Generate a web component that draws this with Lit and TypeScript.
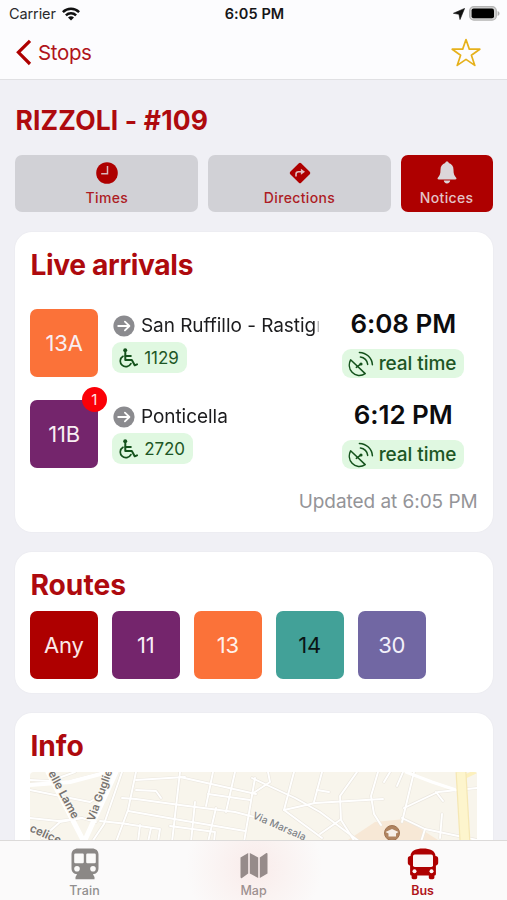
import { LitElement, html, css, svg } from "lit";
import { customElement, property } from "lit/decorators.js";

type Arrival = { line: string; color: string; dest: string; bus: string; time: string; alerts?: number };

const ARRIVALS: Arrival[] = [
  { line: "13A", color: "#fb7239", dest: "San Ruffillo - Rastignano", bus: "1129", time: "6:08 PM" },
  { line: "11B", color: "#74256c", dest: "Ponticella", bus: "2720", time: "6:12 PM", alerts: 1 },
];

const ROUTES = [
  { name: "Any", color: "#ae0000", ink: "#fbe9e9" },
  { name: "11", color: "#74256c", ink: "#f8eef7" },
  { name: "13", color: "#fb7239", ink: "#fff1ea" },
  { name: "14", color: "#42a198", ink: "#0a1514" },
  { name: "30", color: "#7167a3", ink: "#f3f1fa" },
];

const wifi = svg`<svg width="18" height="14" viewBox="0 0 18 14"><g fill="none" stroke="#111" stroke-width="2.5"><path d="M.9 5.1a11.6 11.6 0 0 1 16.2 0"/><path d="M3.9 8.3a7.3 7.3 0 0 1 10.2 0"/></g><path d="M9 13.6 6 10.6a4.3 4.3 0 0 1 6 0z" fill="#111"/></svg>`;
const locate = svg`<svg width="12" height="12" viewBox="0 0 12 12"><path d="M11.6.4 7 11.6 5.9 6.3.4 5.3z" fill="#111" stroke="#111" stroke-width=".6" stroke-linejoin="round"/></svg>`;
const battery = svg`<svg width="31" height="15" viewBox="0 0 31 15"><rect x=".7" y=".7" width="26.6" height="13.4" rx="4.2" fill="#d2d2d2" stroke="#b4b4b4" stroke-width="1.3"/><rect x="2.6" y="2.6" width="22.4" height="9.6" rx="2" fill="#000"/><path d="M28.6 5v5c1.2-.4 1.9-1.4 1.9-2.5s-.7-2.1-1.9-2.5z" fill="#adadad"/></svg>`;
const chevron = svg`<svg width="16" height="27" viewBox="0 0 16 27"><path d="M14 1.8 2.4 13.3 14 25" fill="none" stroke="#ae0000" stroke-width="3.2"/></svg>`;
const star = svg`<svg width="30" height="29" viewBox="0 0 30 29"><path d="M15 1.5 18.3 11.1 28.8 11.2 20.4 17.3 23.8 27.4 15 21.4 6.2 27.4 9.6 17.3 1.2 11.2 11.7 11.1z" fill="none" stroke="#e6b11c" stroke-width="1.7" stroke-linejoin="round"/></svg>`;
const clock = svg`<svg width="22" height="22" viewBox="0 0 22 22"><circle cx="11" cy="11" r="10.8" fill="#ae0000"/><path d="M11.5 4v7.7H5.2" fill="none" stroke="#d8b9bd" stroke-width="1.5"/></svg>`;
const turn = svg`<svg width="22" height="22" viewBox="0 0 22 22"><rect x="3.3" y="3.3" width="15.4" height="15.4" rx="1.6" transform="rotate(45 11 11)" fill="#ae0000"/><path d="M7 14.5v-2.3c0-1.700.8-2.500 2.500-2.500h3" fill="none" stroke="#e0bfc2" stroke-width="1.6"/><path d="M11.9 6.7 16 9.7l-4.100 3z" fill="#e0bfc2"/></svg>`;
const bell = svg`<svg width="20" height="23" viewBox="0 0 20 23"><path d="M10 .4c1 0 1.700.6 1.800 1.500 3 .8 4.700 3.300 4.700 6.800 0 4.200.8 5.900 2.500 7.700.9 1 .4 2-.8 2H1.800c-1.200 0-1.700-1-.8-2 1.700-1.800 2.500-3.500 2.500-7.700 0-3.500 1.700-6 4.700-6.800C8.300 1 9 .4 10 .4z" fill="#dcd6d9"/><path d="M6.800 19.500h6.400c-.2 1.700-1.400 2.900-3.200 2.900s-3-1.200-3.200-2.900z" fill="#dcd6d9"/></svg>`;
const arrow = svg`<svg width="22" height="22" viewBox="0 0 22 22"><circle cx="11" cy="11" r="10.6" fill="#8b8b8f"/><path d="M5.2 11h11M11.9 6.6l4.500 4.400-4.500 4.400" fill="none" stroke="#fff" stroke-width="1.8" stroke-linecap="round" stroke-linejoin="round"/></svg>`;
const wheelchair = svg`<svg width="20" height="20" viewBox="0 0 20 20"><g fill="none" stroke="#14521c" stroke-width="2" stroke-linejoin="round" stroke-linecap="round"><path d="M7.3 4.5v7.4h6.5l2.900 5.400 2.300-1"/><path d="M7.5 7.9h5.3"/><path d="M5 8.3a5.600 5.600 0 1 0 7.900 7.300" stroke-width="1.7"/></g><circle cx="7.2" cy="2.2" r="2" fill="#14521c"/></svg>`;
const dish = svg`<svg width="26" height="26" viewBox="0 0 26 26"><g fill="none" stroke="#14521c" stroke-width="1.5" stroke-linecap="round" stroke-linejoin="round"><path d="M2.600 8.800 17.200 22.600c-4.200 2.900-9.800 2.300-13.100-1.300S.7 12.500 2.600 8.800z"/><path d="M8.300 16.400l4.600-3.500"/><path d="M12.400 6c3.900.4 7 3.500 7.300 7.400"/><path d="M11.400 1.400c6.900.2 12.600 5.500 13 12.300"/></g><circle cx="13" cy="13" r="1.600" fill="#14521c"/></svg>`;
const train = svg`<svg width="28" height="32" viewBox="0 0 28 32"><path d="M7 .5h14c4 0 6.500 2.200 6.500 6v13.500c0 4-2.400 6.200-5.600 6.200L23.500 29v2.300h-19V29l1.600-2.800C2.900 26.200.5 24 .5 20V6.500C.5 2.700 3 .5 7 .5z" fill="#8b8886"/><g fill="#fbfaf9"><rect x="3.200" y="5.500" width="9.600" height="9.800" rx="1.200"/><rect x="15.200" y="5.500" width="9.600" height="9.800" rx="1.200"/><circle cx="6" cy="20.700" r="2.800"/><circle cx="22" cy="20.700" r="2.800"/></g></svg>`;
const mapIcon = svg`<svg width="28" height="27" viewBox="0 0 28 27"><g fill="#968b8a"><path d="M.5 5.500 8.200 1v20.500L2 25.900c-.9.500-1.500.2-1.500-.8z"/><path d="M9.800 1 18.200 5.500V26L9.800 21.500z"/><path d="M19.800 5.500 26 1.200c.9-.5 1.500-.2 1.500.8v19.500L19.800 26z"/></g></svg>`;
const bus = svg`<svg width="32" height="32" viewBox="0 0 32 32"><path d="M3.500 8C3.600 2.800 9 .5 16 .5S28.400 2.800 28.500 8c1.700.1 2.700 1 2.700 2.700v4c0 1.500-.8 2.500-2.300 2.700V26c0 .9-.5 1.500-1.500 1.600v2c0 1-.7 1.700-1.700 1.700h-2.200c-1 0-1.700-.7-1.700-1.700v-2H10.200v2c0 1-.7 1.700-1.700 1.700H6.300c-1 0-1.700-.7-1.700-1.700v-2c-1-.1-1.500-.7-1.500-1.600v-8.600C1.600 17.200.8 16.200.8 14.700v-4C.8 9 1.800 8.100 3.500 8z" fill="#ae0000"/><g fill="#fbf7f6"><rect x="6" y="6.500" width="20" height="12.600" rx="1.800"/><circle cx="7.500" cy="23.300" r="2"/><circle cx="24.500" cy="23.300" r="2"/></g></svg>`;

const STREETS = [
  "M0 12 38 10 76 0", "M0 8 20 9 45 0", "M0 46 28 49 52 46", "M0 18 60 30 76 20", "M12 66 30 50 52 46 66 50",
  "M92 0 74 52 62 70", "M106 0 98 38 86 70", "M92 26 106 27 150 33 205 40 232 47", "M106 8 155 5 M106 18 126 19 131 26",
  "M150 0 142 70", "M98 39 150 48 215 59 M96 52 130 57 128 70", "M110 53 108 70 M121 56 118 70",
  "M165 30 161 70 M186 36 178 70", "M183 0 176 34 M205 0 196 40", "M225 6 214 70", "M150 5 226 22 M178 22 220 28",
  "M140 54 185 60 184 70", "M70 49 98 52", "M222 6 265 26 290 40 330 70", "M238 0 240 10 222 22", "M264 0 254 38 292 66",
  "M254 38 285 31 353 27", "M292 0 284 30", "M327 0 310 24 311 48 325 70", "M310 48 290 62", "M348 0 341 24 344 42 351 53",
  "M287 18 299 20", "M360 0 354 10 M373 0 367 14", "M384 0 372 50", "M374 36 408 20 447 16 M406 20 413 29",
  "M372 46 395 57 391 70 M395 57 447 68", "M412 42 410 66",
];

@customElement("street-map")
class StreetMap extends LitElement {
  static styles = css`
    :host { display: block; height: 140px; overflow: hidden; border-radius: 4px; }
    svg { display: block; }
    .label { font: 600 11.5px Inter, "Liberation Sans", sans-serif; fill: #77736f; stroke: #faf8f2; stroke-width: 2px; paint-order: stroke; }
    .small { font-size: 11px; }
    .light { font-weight: 500; font-size: 10px; letter-spacing: .1px; fill: #808386; }
  `;
  render() {
    return html`<svg width="447" height="140" viewBox="0 0 447 140">
      <rect width="447" height="140" fill="#f8f5ec"></rect>
      <path d="M315 70 345 50 375 47 408 68 408 90 330 90z" fill="#f7e8d6"></path>
      <g fill="none" stroke-linecap="round" stroke-linejoin="round">
        ${STREETS.map((d) => svg`<path d=${d} stroke="#ebe7df" stroke-width="3.2"/>`)}
        ${STREETS.map((d) => svg`<path d=${d} stroke="#fff" stroke-width="1.9"/>`)}
        <path d="M18 0 54 70 M86 0 55 68" stroke="#fff" stroke-width="5"></path>
        <path d="M0 13 40 10 78 0" stroke="#fff" stroke-width="4"></path>
        <path d="M376 0 402 10 426 18" stroke="#fff" stroke-width="3"></path>
        <path d="M430 7 445 0" stroke="#fcf0bd" stroke-width="4"></path>
        <path d="M431 0 435 70" stroke="#f5e7b4" stroke-width="11" stroke-linecap="butt"></path>
        <path d="M431 0 435 70" stroke="#fdf5cd" stroke-width="8.5" stroke-linecap="butt"></path>
      </g>
      <text class="label" transform="translate(18 1) rotate(62)">elle Lame</text>
      <text class="label small" transform="translate(64 50) rotate(-70)">Via Guglielmo</text>
      <text class="label" transform="translate(-1 59) rotate(24)">celice</text>
      <text class="label light" transform="translate(222 46) rotate(23.5)">Via Marsala</text>
      <circle cx="362" cy="61" r="7.5" fill="#b08460" stroke="#a07350"></circle>
      <path d="M355.5 60 362 57 368.5 60 366 61.5v3h-7.5v-3z" fill="#f6efe8"></path>
    </svg>`;
  }
}

@customElement("line-tile")
class LineTile extends LitElement {
  @property() label = "";
  @property() color = "#000";
  @property() ink = "#f8eef2";
  @property({ type: Number }) alerts = 0;
  static styles = css`
    :host { display: block; position: relative; width: 67.5px; height: 67.5px; }
    .tile { height: 100%; border-radius: 7px; display: grid; place-items: center; font-size: 22px; letter-spacing: -.2px; }
    .badge { position: absolute; right: -9px; top: -13px; width: 25px; height: 25px; border-radius: 50%; background: #fb0007; color: #ffe5e5; display: grid; place-items: center; font-size: 15px; }
  `;
  render() {
    return html`<div class="tile" style="background:${this.color};color:${this.ink}">${this.label}</div>
      ${this.alerts ? html`<div class="badge">${this.alerts}</div>` : ""}`;
  }
}

@customElement("app-root")
class AppRoot extends LitElement {
  static styles = css`
    :host { display: flex; flex-direction: column; width: 507px; height: 900px; overflow: hidden; background: #f0f0f5; font-family: Inter, "Liberation Sans", sans-serif; color: #0c0c0e; }
    * { box-sizing: border-box; }
    svg { display: block; flex: none; }
    .header { height: 79.5px; flex: none; background: #fcfcfe; border-bottom: 1.5px solid #e0e0e3; }
    .status { height: 27px; display: grid; grid-template-columns: 1fr auto 1fr; align-items: center; padding: 0 7px 0 9px; font-size: 14.5px; color: #2a2a2c; }
    .left { display: flex; align-items: center; gap: 6px; }
    .carrier { letter-spacing: -.1px; }
    .clock { font-weight: 600; color: #161618; letter-spacing: .1px; }
    .right { display: flex; align-items: center; justify-content: flex-end; gap: 4.5px; }
    .nav { height: 50px; display: flex; align-items: center; justify-content: space-between; padding: 0 26px 0 16px; }
    .back { display: flex; align-items: center; gap: 6px; color: #b0141a; font-size: 20.5px; letter-spacing: -.35px; }
    .content { flex: 1; min-height: 0; overflow: hidden; padding: 0 14.4px 0 15.4px; }
    .title { margin: 0; padding-top: 24px; font-size: 26.5px; line-height: 32px; font-weight: 700; letter-spacing: .15px; color: #ae0a0e; }
    .actions { display: grid; grid-template-columns: 183px 183px 92px; justify-content: space-between; margin-top: 19.5px; }
    .action { height: 57px; border-radius: 7px; background: #d1d1d6; color: #ad1c24; display: flex; flex-direction: column; align-items: center; padding-top: 6.5px; gap: 5.5px; font-size: 14px; line-height: 17px; font-weight: 500; letter-spacing: .35px; }
    .action.solid { background: #ae0000; color: #e3c3c6; padding-top: 5.5px; }
    .card { background: #fff; border-radius: 17px; padding: 15px; margin-top: 20px; box-shadow: 0 0 2px rgba(0,0,0,.05); }
    .card h2 { margin: 0; font-size: 28.2px; line-height: 36px; font-weight: 700; color: #ae0a0e; }
    .card h2.h-live { letter-spacing: -.35px; }
    .live { height: 300px; }
    .row { display: grid; grid-template-columns: 67.5px 206px 1fr; column-gap: 15px; height: 91px; }
    .rows { padding-top: 26px; }
    .mid { display: flex; flex-direction: column; align-items: flex-start; gap: 5px; padding-top: 5px; min-width: 0; }
    .dest { display: flex; align-items: center; gap: 6px; width: 100%; font-size: 19px; line-height: 23px; letter-spacing: -.04px; color: #1c1c1e; }
    .name { flex: 1; min-width: 0; overflow: hidden; white-space: nowrap; mask-image: linear-gradient(to left, rgba(0,0,0,.25), #000 5px); }
    .chip { background: #e0f8e1; color: #1d5625; border-radius: 9px; display: flex; align-items: center; }
    .vehicle { height: 31px; margin-left: -.6px; padding: 0 8px 0 6px; gap: 6px; font-size: 17px; letter-spacing: -.1px; }
    .times { display: flex; flex-direction: column; align-items: center; padding-right: 5px; }
    .when { font-size: 26px; line-height: 30px; font-weight: 600; letter-spacing: -.05px; }
    .rt { height: 29px; margin-top: 10px; padding: 0 8px 0 6px; gap: 4.5px; font-size: 19px; font-weight: 500; letter-spacing: -.07px; }
    .updated { text-align: right; font-size: 19px; line-height: 24px; letter-spacing: -.05px; color: #949498; margin-top: -.6px; }
    .routes { height: 141px; }
    .list { display: flex; gap: 14.5px; margin-top: 8.4px; margin-left: -.4px; }
    .info { height: 230px; }
    .map { display: block; margin-top: 8px; }
    .tabs { flex: none; height: 60px; border-top: 1px solid #dcdad9; background: radial-gradient(circle at 254px 26px, #f9ebea 0, #faf3f2 34px, #fbfafa 68px); display: grid; grid-template-columns: repeat(3, 1fr); }
    .tab { display: flex; flex-direction: column; align-items: center; justify-content: space-between; padding: 7px 0 2px; font-size: 12.5px; line-height: 15px; font-weight: 500; letter-spacing: .1px; color: #918f8f; }
    .tab:nth-child(2) { padding-top: 11px; letter-spacing: 0; color: #9d9090; }
    .tab.on { color: #b0141a; font-weight: 600; letter-spacing: -.1px; }
  `;
  render() {
    return html`
      <div class="header">
        <div class="status"><div class="left"><span class="carrier">Carrier</span>${wifi}</div><span class="clock">6:05 PM</span><div class="right">${locate}${battery}</div></div>
        <div class="nav"><div class="back">${chevron}<span>Stops</span></div>${star}</div>
      </div>
      <main class="content">
        <h1 class="title">RIZZOLI - #109</h1>
        <div class="actions">
          <div class="action">${clock}<span>Times</span></div>
          <div class="action">${turn}<span>Directions</span></div>
          <div class="action solid">${bell}<span>Notices</span></div>
        </div>
        <section class="card live">
          <h2 class="h-live">Live arrivals</h2>
          <div class="rows">
            ${ARRIVALS.map((a) => html`<div class="row">
              <line-tile .label=${a.line} .color=${a.color} .alerts=${a.alerts ?? 0}></line-tile>
              <div class="mid"><div class="dest">${arrow}<span class="name">${a.dest}</span></div><div class="chip vehicle">${wheelchair}<span>${a.bus}</span></div></div>
              <div class="times"><div class="when">${a.time}</div><div class="chip rt">${dish}<span>real time</span></div></div>
            </div>`)}
          </div>
          <div class="updated">Updated at 6:05 PM</div>
        </section>
        <section class="card routes">
          <h2>Routes</h2>
          <div class="list">${ROUTES.map((r) => html`<line-tile .label=${r.name} .color=${r.color} .ink=${r.ink}></line-tile>`)}</div>
        </section>
        <section class="card info"><h2>Info</h2><street-map class="map"></street-map></section>
      </main>
      <nav class="tabs">
        <div class="tab">${train}<span>Train</span></div>
        <div class="tab">${mapIcon}<span>Map</span></div>
        <div class="tab on">${bus}<span>Bus</span></div>
      </nav>`;
  }
}
